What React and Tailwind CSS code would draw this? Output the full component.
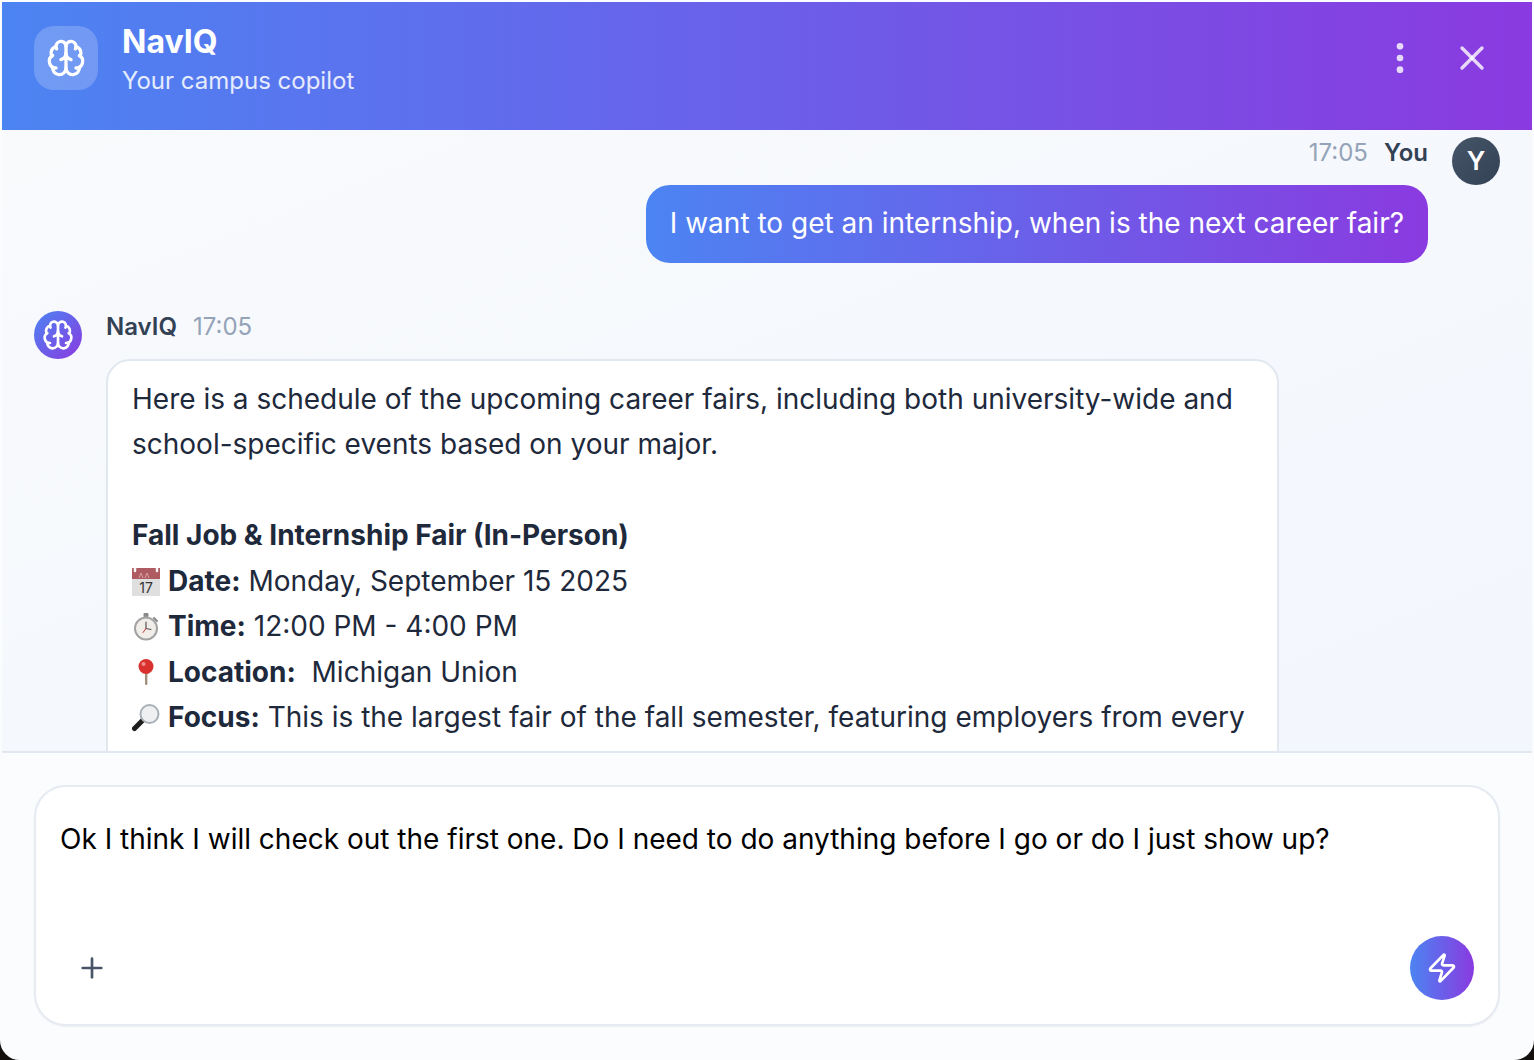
import { Brain, EllipsisVertical, Plus, X, Zap } from 'lucide-react';

const CalendarEmoji = () => (
  <svg viewBox="0 0 28 28" className="inline-block w-7 h-7 mr-2 align-[-5px]">
    <rect x="0" y="0" width="28" height="28" fill="#dfdfdf" />
    <rect x="0" y="0" width="28" height="11" fill="#ae5c62" />
    <path d="M3 0v3M25 0v3" stroke="#f4f4f4" strokeWidth="2.5" strokeLinecap="round" />
    <path d="M7 10l2-5 2 5M13 10l2-5 2 5" stroke="#d9a0a3" strokeWidth="1" fill="none" />
    <text x="14" y="25" textAnchor="middle" fontSize="14" fill="#333" fontFamily="Inter, sans-serif">17</text>
  </svg>
);

const TimerEmoji = () => (
  <svg viewBox="0 0 28 28" className="inline-block w-7 h-7 mr-2 align-[-5px]">
    <rect x="11.5" y="0" width="5" height="4" rx="1" fill="#8a8a8a" />
    <path d="M22 5l3 3" stroke="#8a8a8a" strokeWidth="2" strokeLinecap="round" />
    <circle cx="14" cy="15.5" r="12" fill="#a3a3a3" />
    <circle cx="14" cy="15.5" r="10" fill="#f1eeea" />
    <path d="M14 15.5V9M14 15.5l5 1" stroke="#555" strokeWidth="1.2" strokeLinecap="round" />
    <path d="M14 15.5l-3 4" stroke="#c33" strokeWidth="1" strokeLinecap="round" />
  </svg>
);

const PinEmoji = () => (
  <svg viewBox="0 0 28 28" className="inline-block w-7 h-7 mr-2 align-[-5px]">
    <rect x="13" y="12" width="2.4" height="14" rx="1" fill="#a38f7d" />
    <circle cx="14" cy="7.5" r="7.5" fill="#d9322e" />
    <circle cx="11.5" cy="5" r="2" fill="#f08d88" />
  </svg>
);

const MagnifierEmoji = () => (
  <svg viewBox="0 0 28 28" className="inline-block w-7 h-7 mr-2 align-[-5px]">
    <path d="M11 16L2.5 24.5" stroke="#1d1d1d" strokeWidth="5" strokeLinecap="round" />
    <circle cx="17.5" cy="10" r="9" fill="#eef0f2" stroke="#a9b0b8" strokeWidth="2" />
  </svg>
);

const App = () => {
  return (
    <div className="w-[1534px] h-[1060px] bg-[#14100e] font-['Inter',sans-serif]">
      <div className="flex flex-col w-full h-full overflow-hidden border-2 border-[#fbfcfe] rounded-b-[20px] bg-[#fbfcfe]">
        <header className="flex items-center justify-between h-[128px] shrink-0 pl-8 pr-10 bg-linear-to-r/srgb from-[#4c84f2] to-[#8a3ae0]">
          <div className="flex items-center gap-6 -mt-4">
            <div className="flex items-center justify-center w-16 h-16 rounded-[20px] bg-white/20">
              <Brain className="w-10 h-10 text-white" strokeWidth={2} />
            </div>
            <div className="mt-[3px]">
              <div className="text-[32px] leading-[40px] font-bold text-white">NavIQ</div>
              <div className="mt-[3px] text-[24px] leading-[32px] text-white/85">Your campus copilot</div>
            </div>
          </div>
          <div className="flex items-center gap-[32px] -mt-[16px]">
            <EllipsisVertical className="w-10 h-10 text-white/80" strokeWidth={2} />
            <X className="w-10 h-10 text-white/80" strokeWidth={2} />
          </div>
        </header>

        <main className="flex-1 min-h-0 overflow-hidden px-8 pt-[7px] bg-gradient-to-br from-[#f8fafc] to-[#f3f6fd]">
          <div className="flex justify-end gap-6">
            <div className="flex flex-col items-end">
              <div className="flex items-center gap-4 h-[30px] mt-[1px] mb-[17px]">
                <span className="text-[24px] text-[#94a3b8]">17:05</span>
                <span className="text-[24px] font-semibold text-[#334155]">You</span>
              </div>
              <div className="px-6 pt-[15px] pb-[17px] text-[28px] leading-[46px] text-white rounded-[24px] bg-linear-to-r/srgb from-[#4c84f2] to-[#8a3ae0]">
                I want to get an internship, when is the next career fair?
              </div>
            </div>
            <div className="flex items-center justify-center w-12 h-12 rounded-full shrink-0 text-[26px] leading-[46px] font-semibold text-white bg-gradient-to-br from-[#475569] to-[#334155]">
              Y
            </div>
          </div>

          <div className="flex gap-6 mt-12">
            <div className="flex items-center justify-center w-12 h-12 rounded-full shrink-0 bg-linear-to-br/srgb from-[#4c84f2] to-[#8a3ae0]">
              <Brain className="w-8 h-8 text-white" strokeWidth={2} />
            </div>
            <div className="w-[1173px]">
              <div className="flex items-center gap-4 h-[30px] mt-[1px] mb-[17px]">
                <span className="text-[24px] font-semibold text-[#334155]">NavIQ</span>
                <span className="text-[24px] text-[#94a3b8]">17:05</span>
              </div>
              <div className="px-6 pt-[15.5px] pb-10 text-[28px] leading-[45.5px] text-[#1e293b] bg-white border-2 border-[#e2e8f0] rounded-[24px]">
                Here is a schedule of the upcoming career fairs, including both university-wide and
                <br />
                school-specific events based on your major.
                <br />
                <br />
                <strong className="font-bold">Fall Job &amp; Internship Fair (In-Person)</strong>
                <br />
                <CalendarEmoji />
                <strong className="font-bold">Date:</strong> Monday, September 15 2025
                <br />
                <TimerEmoji />
                <strong className="font-bold">Time:</strong> 12:00 PM - 4:00 PM
                <br />
                <PinEmoji />
                <strong className="font-bold">Location:</strong>&nbsp; Michigan Union
                <br />
                <MagnifierEmoji />
                <strong className="font-bold">Focus:</strong> This is the largest fair of the fall semester, featuring employers from every
              </div>
            </div>
          </div>
        </main>

        <footer className="h-[307px] shrink-0 px-8 pt-[32px] border-t-2 border-[#e2e8f0] bg-[#fbfcfe]">
          <div className="flex flex-col justify-between h-[241px] pl-6 pr-6 pt-[29px] pb-6 bg-white border-2 border-[#e6ebf2] rounded-[32px] shadow-xs">
            <div className="text-[28px] leading-[46px] text-black">
              Ok I think I will check out the first one. Do I need to do anything before I go or do I just show up?
            </div>
            <div className="flex items-center justify-between">
              <div className="flex items-center justify-center w-16 h-16">
                <Plus className="w-8 h-8 text-[#475569]" strokeWidth={2} />
              </div>
              <div className="flex items-center justify-center w-16 h-16 rounded-full bg-linear-to-r/srgb from-[#4c84f2] to-[#8a3ae0]">
                <Zap className="w-8 h-8 text-white" strokeWidth={2} />
              </div>
            </div>
          </div>
        </footer>
      </div>
    </div>
  );
};

export default App;
